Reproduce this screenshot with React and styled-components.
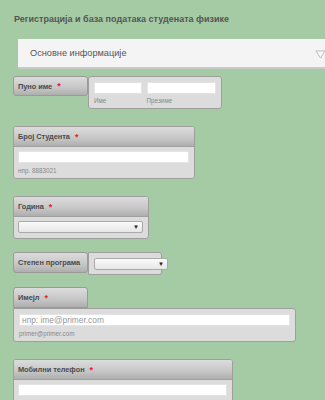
import React from "react";
import styled, { createGlobalStyle } from "styled-components";

const Global = createGlobalStyle`
  html, body { margin: 0; padding: 0; }
  body {
    background: #a5cba5;
    font-family: "Liberation Sans", Arial, sans-serif;
    overflow: hidden;
    width: 325px;
    height: 400px;
  }
`;

const Page = styled.div`
  padding: 13px 0 0 13px;
  display: flex;
  flex-direction: column;
`;

const Title = styled.h1`
  margin: 0 0 0 1px;
  font-size: 9px;
  line-height: 12px;
  font-weight: bold;
  color: #555;
`;

const Section = styled.div`
  margin: 14px 0 0 5px;
  width: 320px;
  height: 30px;
  box-sizing: border-box;
  background: #f4f4f4;
  border-bottom: 2px solid #c9c9c9;
  display: flex;
  align-items: center;
  padding-left: 12px;
  font-size: 9.2px;
  color: #555;
  position: relative;
`;

const Arrow = styled.svg`
  position: absolute;
  left: 297px;
  top: 11px;
`;

const Row = styled.div`
  display: flex;
  align-items: flex-start;
  margin-top: ${(p) => p.$mt}px;
`;

const Column = styled.div`
  display: flex;
  flex-direction: column;
  margin-top: ${(p) => p.$mt}px;
  width: ${(p) => p.$w}px;
`;

const headText = `
  font-size: 7.4px;
  font-weight: bold;
  color: #4a4a4a;
  white-space: nowrap;
  letter-spacing: -0.05px;
`;

const Label = styled.div`
  width: ${(p) => p.$w || 75}px;
  height: ${(p) => p.$h || 20}px;
  box-sizing: border-box;
  background: linear-gradient(#dcdcdc, #c6c6c6 60%, #aeaeae);
  border: 1px solid #9a9a9a;
  border-radius: ${(p) => (p.$top ? "3px 3px 0 0" : "3px")};
  display: flex;
  align-items: center;
  padding-left: 4px;
  flex-shrink: 0;
  ${headText}
`;

const Star = styled.span`
  color: #e8202a;
  margin-left: 5px;
  font-size: 9px;
`;

const Box = styled.div`
  box-sizing: border-box;
  background: #dcdcdc;
  border: 1px solid #9e9e9e;
  border-radius: ${(p) => p.$r || "3px"};
  width: ${(p) => (p.$w ? p.$w + "px" : "auto")};
  height: ${(p) => p.$h}px;
  padding: 5px 5px 0 5px;
  display: flex;
  flex-direction: ${(p) => (p.$row ? "row" : "column")};
  gap: 5px;
`;

const Card = styled.div`
  box-sizing: border-box;
  width: ${(p) => p.$w}px;
  height: ${(p) => p.$h}px;
  border: 1px solid #9e9e9e;
  border-radius: 3px;
  overflow: hidden;
  display: flex;
  flex-direction: column;
  background: #dcdcdc;
`;

const CardHead = styled.div`
  height: 20px;
  flex-shrink: 0;
  box-sizing: border-box;
  background: linear-gradient(#dcdcdc, #c6c6c6 60%, #aeaeae);
  border-bottom: 1px solid #a0a0a0;
  display: flex;
  align-items: center;
  padding-left: 4px;
  ${headText}
`;

const CardBody = styled.div`
  padding: 4px 5px 0 4px;
  display: flex;
  flex-direction: column;
`;

const Sub = styled.div`
  display: flex;
  flex-direction: column;
  width: ${(p) => p.$w}px;
`;

const Input = styled.div`
  height: 12px;
  box-sizing: border-box;
  background: #fff;
  border: 1px solid #e4e4e4;
  font-size: 8.4px;
  color: #999;
  padding-left: 2px;
  display: flex;
  align-items: center;
  width: ${(p) => (p.$w ? p.$w + "px" : "auto")};
`;

const Hint = styled.div`
  font-size: 6.3px;
  color: #888;
  margin-top: ${(p) => p.$mt || 4}px;
`;

const Select = styled.div`
  height: 12px;
  box-sizing: border-box;
  width: ${(p) => (p.$w ? p.$w + "px" : "auto")};
  background: linear-gradient(#fafafa, #e6e6e6);
  border: 1px solid #aaa;
  border-radius: 2px;
  display: flex;
  align-items: center;
  justify-content: flex-end;
  padding-right: 3px;
  font-size: 6px;
  color: #222;
`;

export default function App() {
  return (
    <>
      <Global />
      <Page>
        <Title>Регистрација и база података студената физике</Title>
        <Section>
          Основне информације
          <Arrow width="11" height="9" viewBox="0 0 11 9">
            <path d="M1 1 L10 1 L5.5 8 Z" fill="#fafafa" stroke="#bbb" strokeWidth="1" />
          </Arrow>
        </Section>

        <Row $mt={7}>
          <Label>
            Пуно име<Star>*</Star>
          </Label>
          <Box $w={134} $h={33} $row>
            <Sub $w={48}>
              <Input />
              <Hint $mt={3}>Име</Hint>
            </Sub>
            <Sub $w={70}>
              <Input />
              <Hint $mt={3}>Презиме</Hint>
            </Sub>
          </Box>
        </Row>

        <Column $mt={17} $w={182}>
          <Card $w={182} $h={53}>
            <CardHead>
              Број Студента<Star>*</Star>
            </CardHead>
            <CardBody>
              <Input />
              <Hint>нпр. 8883021</Hint>
            </CardBody>
          </Card>
        </Column>

        <Column $mt={17} $w={136}>
          <Card $w={136} $h={43}>
            <CardHead>
              Година<Star>*</Star>
            </CardHead>
            <CardBody>
              <Select>▼</Select>
            </CardBody>
          </Card>
        </Column>

        <Row $mt={13}>
          <Label $h={21}>Степен програма</Label>
          <Box $w={74} $h={23} $r="0 3px 3px 0">
            <Select $w={74}>▼</Select>
          </Box>
        </Row>

        <Column $mt={12} $w={283}>
          <Label $top $h={21} $w={75}>
            Имејл<Star>*</Star>
          </Label>
          <Box $w={283} $h={34} $r="0 3px 3px 3px">
            <Input>нпр: ime@primer.com</Input>
            <Hint $mt={-1}>primer@primer.com</Hint>
          </Box>
        </Column>

        <Column $mt={17} $w={220}>
          <Card $w={220} $h={60}>
            <CardHead>
              Мобилни телефон<Star>*</Star>
            </CardHead>
            <CardBody>
              <Input />
            </CardBody>
          </Card>
        </Column>
      </Page>
    </>
  );
}
